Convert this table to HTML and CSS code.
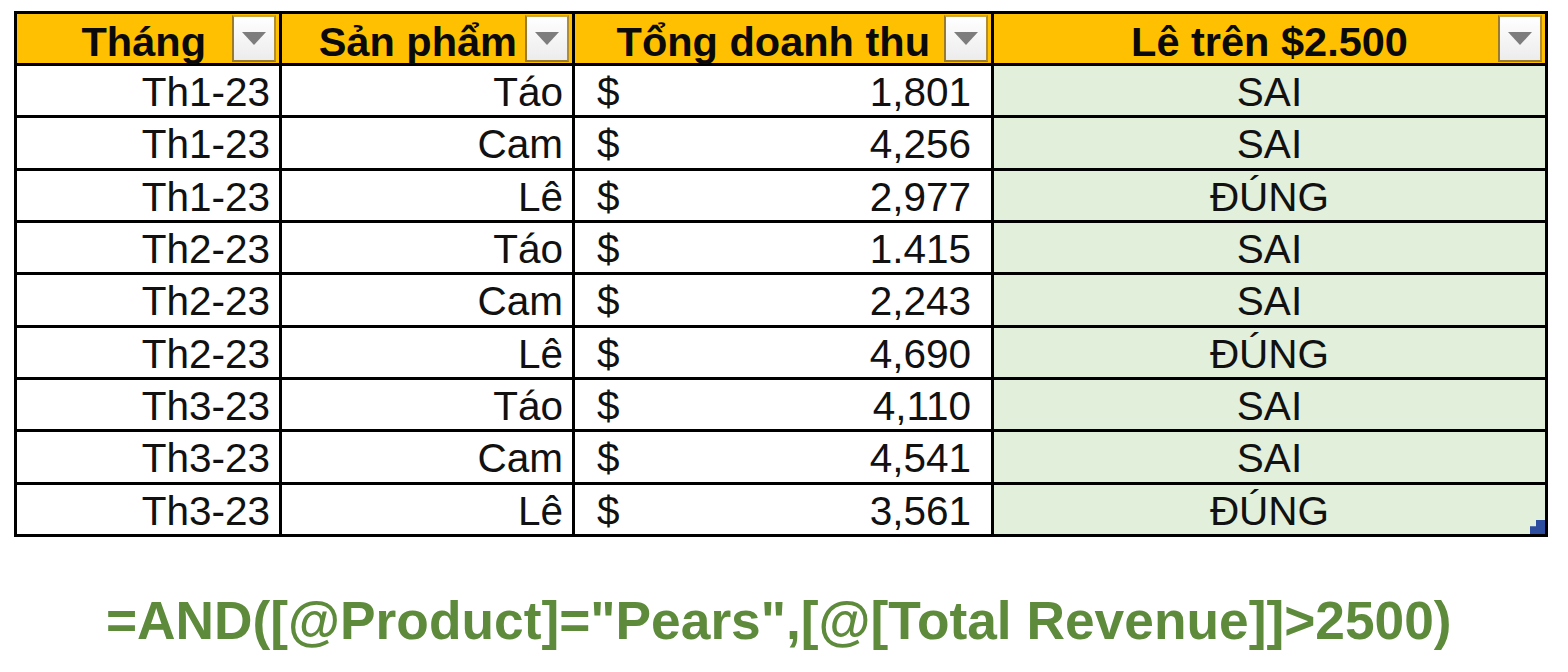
FILE: index.html
```html
<!DOCTYPE html>
<html lang="vi">
<head>
<meta charset="utf-8">
<title>Bảng doanh thu</title>
<link rel="stylesheet" href="styles.css">
</head>
<body>
<div class="sheet">
  <div class="hcell c1"><span class="htext">Tháng</span><span class="filter"><span class="tri"></span></span></div>
  <div class="hcell c2"><span class="htext">Sản phẩm</span><span class="filter"><span class="tri"></span></span></div>
  <div class="hcell c3"><span class="htext">Tổng doanh thu</span><span class="filter"><span class="tri"></span></span></div>
  <div class="hcell c4"><span class="htext">Lê trên $2.500</span><span class="filter"><span class="tri"></span></span></div>

  <div class="cell r">Th1-23</div><div class="cell r">Táo</div><div class="cell money"><span>$</span><span>1,801</span></div><div class="cell res">SAI</div>
  <div class="cell r">Th1-23</div><div class="cell r">Cam</div><div class="cell money"><span>$</span><span>4,256</span></div><div class="cell res">SAI</div>
  <div class="cell r">Th1-23</div><div class="cell r">Lê</div><div class="cell money"><span>$</span><span>2,977</span></div><div class="cell res">ĐÚNG</div>
  <div class="cell r">Th2-23</div><div class="cell r">Táo</div><div class="cell money"><span>$</span><span>1.415</span></div><div class="cell res">SAI</div>
  <div class="cell r">Th2-23</div><div class="cell r">Cam</div><div class="cell money"><span>$</span><span>2,243</span></div><div class="cell res">SAI</div>
  <div class="cell r">Th2-23</div><div class="cell r">Lê</div><div class="cell money"><span>$</span><span>4,690</span></div><div class="cell res">ĐÚNG</div>
  <div class="cell r">Th3-23</div><div class="cell r">Táo</div><div class="cell money"><span>$</span><span>4,110</span></div><div class="cell res">SAI</div>
  <div class="cell r">Th3-23</div><div class="cell r">Cam</div><div class="cell money"><span>$</span><span>4,541</span></div><div class="cell res">SAI</div>
  <div class="cell r">Th3-23</div><div class="cell r">Lê</div><div class="cell money"><span>$</span><span>3,561</span></div><div class="cell res last">ĐÚNG<span class="handle"></span></div>
</div>
<div class="formula">=AND([@Product]="Pears",[@[Total Revenue]]&gt;2500)</div>
</body>
</html>
```

FILE: styles.css
```css
html, body {
  margin: 0;
  padding: 0;
  background: #ffffff;
}
body {
  padding: 11px 0 0 14px;
  font-family: "Liberation Sans", Arial, sans-serif;
  color: #111111;
}
.sheet {
  display: grid;
  grid-template-columns: 262px 290px 416px 551px;
  grid-template-rows: 49px repeat(9, 49.33px);
  gap: 3px;
  padding: 3px;
  background: #000000;
  width: 1534px;
  box-sizing: border-box;
}
.hcell {
  background: #fec000;
  display: flex;
  align-items: stretch;
}
.htext {
  flex: 1;
  font-weight: bold;
  font-size: 41.5px;
  line-height: 49px;
  padding-top: 3px;
  box-sizing: border-box;
  text-align: right;
  color: #0a0a0a;
  white-space: nowrap;
}
.c1 .htext { padding-right: 26px; }
.c2 .htext { padding-right: 8px; }
.c3 .htext { padding-right: 14px; }
.c4 .htext { text-align: center; padding-left: 47px; }
.filter {
  width: 44px;
  margin: 1px 3px 1px 0;
  box-sizing: border-box;
  border: 2px solid #9a7a2c;
  border-top-color: #c9a64a;
  border-right-color: #b08c34;
  background: linear-gradient(#ffffff, #ececec);
  display: flex;
  align-items: center;
  justify-content: center;
}
.tri {
  width: 0;
  height: 0;
  border-left: 12px solid transparent;
  border-right: 12px solid transparent;
  border-top: 13px solid #7d7d7d;
}
.cell {
  background: #ffffff;
  font-size: 40.5px;
  line-height: 49px;
  padding-top: 2px;
  box-sizing: border-box;
  white-space: nowrap;
}
.r {
  text-align: right;
  padding-right: 9px;
}
.money {
  display: flex;
  justify-content: space-between;
  padding-left: 22px;
  padding-right: 20px;
}
.res {
  background: #e2efda;
  text-align: center;
}
.last {
  position: relative;
}
.handle {
  position: absolute;
  right: 0;
  bottom: 0;
  width: 15px;
  height: 14px;
  background: #2d4e9e;
  clip-path: polygon(40% 0, 100% 0, 100% 100%, 0 100%, 0 45%, 40% 45%);
}
.formula {
  margin-top: 54px;
  padding-left: 92px;
  font-weight: bold;
  font-size: 53.3px;
  line-height: 60px;
  color: #5d8b3b;
  white-space: nowrap;
}
```
